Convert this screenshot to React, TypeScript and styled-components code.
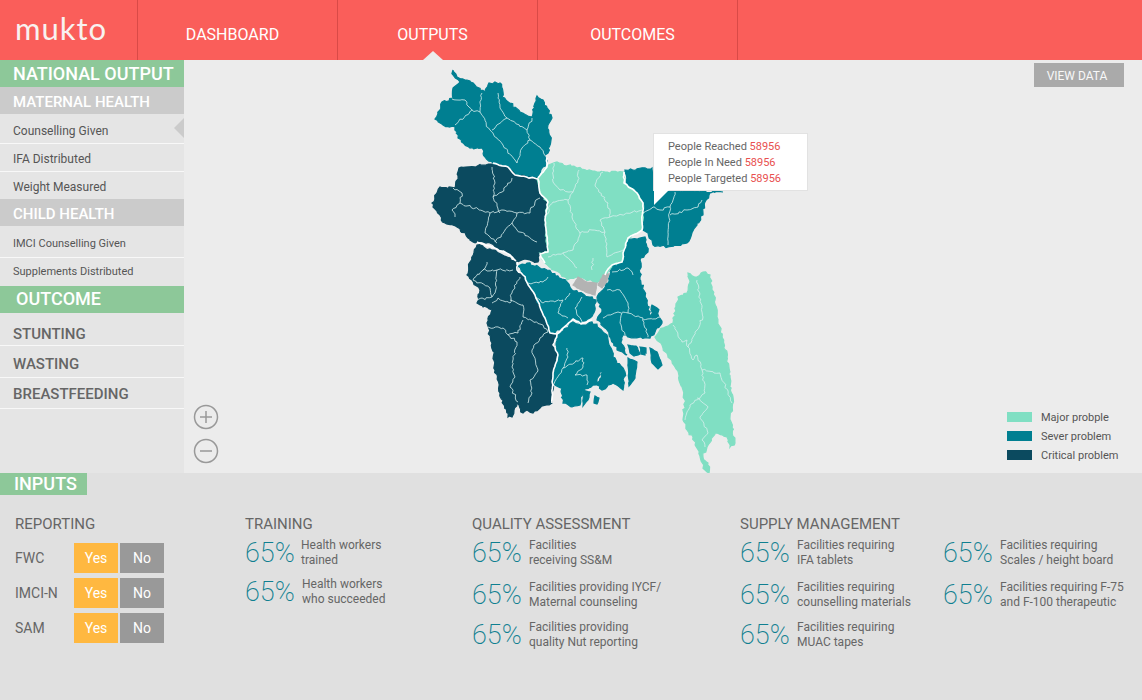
import React, { useMemo } from "react";
import styled, { createGlobalStyle } from "styled-components";

type Pt = number[];
type Tone = "major" | "sever" | "critical" | "capital";

const TONES: Record<Tone, string> = {
  major: "#80dfc3",
  sever: "#007f91",
  critical: "#0b4a5f",
  capital: "#b3b3b3",
};

const REGIONS: { tone: Tone; pts: Pt[]; fine?: boolean }[] = [
  // rangpur
  { tone: "sever", pts: [[453,70],[457,77],[465,80],[470,81],[475,85],[485,92],[489,83],[500,83],[503,92],[502,97],[510,103],[520,112],[532,117],[535,103],[537,96],[543,100],[547,108],[552,118],[548,125],[551,140],[548,153],[545,155],[547,162],[543,167],[538,178],[527,178],[513,175],[508,167],[493,163],[485,157],[482,148],[470,148],[458,138],[455,127],[443,125],[435,119],[440,110],[442,102],[453,98],[453,88],[460,82],[453,75]] },
  // rajshahi
  { tone: "critical", pts: [[459,168],[492,164],[508,167],[515,175],[538,179],[540,193],[547,200],[545,220],[548,250],[540,254],[538,262],[525,259],[516,261],[510,253],[497,248],[490,243],[477,242],[473,242],[457,227],[445,223],[433,207],[432,203],[440,187],[455,188]] },
  // khulna
  { tone: "critical", pts: [[470,262],[477,245],[497,252],[510,258],[516,262],[517,270],[523,275],[535,295],[545,318],[550,333],[556,334],[553,345],[558,355],[553,373],[552,403],[540,408],[533,413],[527,410],[523,413],[517,403],[514,410],[512,417],[508,417],[500,393],[495,370],[492,343],[487,323],[492,310],[477,303],[480,290],[472,280],[467,275]] },
  // dhaka west
  { tone: "sever", pts: [[518,266],[527,263],[547,270],[567,282],[572,290],[590,297],[596,300],[595,310],[590,318],[580,323],[573,318],[560,330],[550,333],[545,318],[535,295],[523,275]] },
  // barisal
  { tone: "sever", pts: [[557,335],[573,322],[583,325],[592,322],[607,335],[613,357],[625,372],[623,390],[613,383],[602,390],[597,385],[603,372],[600,372],[596,385],[583,390],[580,405],[572,407],[563,403],[562,388],[555,385],[553,375],[558,357],[556,345]] },
  { tone: "sever", pts: [[628,358],[637,362],[635,378],[629,386]], fine: true },
  { tone: "sever", pts: [[628,345],[636,346],[640,354],[634,356],[630,353]], fine: true },
  { tone: "sever", pts: [[640,347],[646,348],[646,353],[641,351]], fine: true },
  { tone: "sever", pts: [[650,348],[657,352],[662,365],[658,369],[652,363]], fine: true },
  { tone: "sever", pts: [[641,350],[645,352],[645,355],[641,354]], fine: true },
  { tone: "sever", pts: [[583,390],[590,392],[588,400],[583,406]], fine: true },
  { tone: "sever", pts: [[595,396],[599,398],[597,404],[594,403]], fine: true },
  // comilla
  { tone: "sever", pts: [[610,271],[618,258],[627,240],[645,237],[648,252],[640,260],[640,277],[647,303],[651,319],[652,305],[657,308],[662,323],[655,332],[650,338],[633,338],[623,335],[621,342],[627,355],[617,350],[607,330],[597,320],[602,310],[597,297],[608,283]] },
  // sylhet
  { tone: "sever", pts: [[625,170],[652,168],[665,190],[723,192],[710,193],[705,202],[703,213],[687,243],[668,247],[653,245],[648,233],[643,230],[643,203],[637,193],[627,185]] },
  // dhaka north
  { tone: "major", pts: [[547,167],[557,162],[577,168],[597,172],[623,172],[624,183],[637,193],[643,203],[642,230],[628,238],[623,253],[622,262],[612,265],[605,275],[597,283],[577,277],[567,280],[545,263],[540,253],[548,252],[545,220],[548,202],[540,193],[538,178]] },
  // chittagong
  { tone: "major", pts: [[688,273],[697,277],[703,272],[710,275],[715,300],[717,317],[727,357],[733,403],[730,417],[735,443],[730,447],[727,437],[715,433],[707,447],[703,457],[708,463],[709,473],[705,470],[693,437],[687,430],[683,420],[685,400],[677,370],[663,348],[655,337],[662,328],[673,323],[678,297],[687,293],[690,282]] },
  { tone: "capital", pts: [[578,277],[587,282],[597,283],[595,295],[588,293],[577,288],[573,285]], fine: true },
  { tone: "capital", pts: [[603,275],[609,274],[607,281],[602,288],[598,285],[600,281]], fine: true },
];

const THIN_LINES: Pt[][] = [
  [[452,99],[465,100],[472,110],[455,125]],
  [[482,93],[480,112],[472,110]],
  [[480,112],[490,130],[503,145],[515,160],[517,163]],
  [[498,93],[500,108],[507,118],[492,130]],
  [[507,118],[527,130],[530,140],[522,148],[517,163]],
  [[530,140],[540,147],[547,157]],
  [[532,118],[527,130]],
  [[492,167],[495,183],[493,197],[502,192],[512,178]],
  [[453,188],[462,193],[460,203],[452,210],[455,217]],
  [[460,203],[490,213],[503,210],[517,213],[512,223],[517,230],[537,242]],
  [[517,213],[530,213],[535,202],[540,198]],
  [[493,197],[500,213]],
  [[490,213],[485,233],[497,243]],
  [[512,223],[495,242]],
  [[554,163],[553,182],[560,190],[573,192],[578,180],[579,170]],
  [[573,192],[568,200],[572,217],[580,233],[573,250],[548,257]],
  [[603,172],[595,185],[608,203],[610,217],[600,220],[605,232],[592,230],[580,233]],
  [[610,217],[642,210]],
  [[568,200],[553,202],[545,217]],
  [[605,232],[607,257],[623,250]],
  [[563,253],[577,268]],
  [[593,258],[592,270]],
  [[643,213],[653,207],[660,210],[670,207],[675,192]],
  [[670,207],[668,237],[668,245]],
  [[670,215],[687,210],[698,207],[702,200]],
  [[487,262],[483,270],[473,280],[490,288],[492,297],[477,300]],
  [[483,270],[497,270],[513,270]],
  [[497,270],[495,293],[492,297]],
  [[520,277],[512,293],[510,303],[498,298],[492,303]],
  [[510,300],[523,305],[523,317],[543,325]],
  [[488,327],[503,328],[508,335],[518,333],[523,320]],
  [[508,335],[517,342],[512,367],[515,377],[510,387],[518,402]],
  [[543,325],[548,332],[540,338],[532,350],[538,370],[530,380],[532,393],[528,403]],
  [[528,283],[543,282],[548,277]],
  [[543,303],[563,300],[558,313],[568,318]],
  [[535,297],[543,303]],
  [[570,293],[565,300]],
  [[582,297],[575,308],[582,323]],
  [[567,348],[568,357],[563,368],[553,385]],
  [[563,368],[583,358],[583,367],[575,375],[587,375],[587,385]],
  [[607,290],[620,290],[628,303],[628,313],[618,312],[603,318]],
  [[622,313],[620,323],[625,335]],
  [[628,313],[643,318],[648,337]],
  [[643,320],[660,317]],
  [[612,272],[628,268],[633,275]],
  [[673,325],[682,342],[687,340],[688,347],[697,330],[703,317],[697,280]],
  [[688,347],[693,360],[697,355],[702,370],[720,373],[732,403]],
  [[702,370],[705,393],[690,405],[685,420]],
  [[697,398],[708,407],[700,417],[708,433],[702,440],[705,447]],
];

const THICK_LINES: Pt[][] = [
  [[493,163],[508,167],[515,175],[538,179],[540,193],[548,202],[545,220],[548,252],[540,254],[545,263]],
  [[547,158],[547,167],[538,178]],
  [[624,172],[624,183],[637,193],[643,203],[642,230],[628,238],[623,253],[622,262],[612,265],[605,275]],
  [[517,262],[517,270],[523,275],[535,295],[545,318],[550,333],[557,334],[553,345],[558,355],[553,373],[552,403]],
  [[557,334],[573,319],[581,324],[592,320]],
  [[477,242],[497,249],[510,255],[516,261]],
];

// little seeded jitter so the borders look traced and not straight
function roughen(pts: Pt[], closed: boolean, amount: number, step: number) {
  let seed = Math.round(pts[0][0] * 7 + pts[0][1] * 13);
  const rand = () => {
    seed = (seed * 1103515245 + 12345) & 0x7fffffff;
    return seed / 0x7fffffff - 0.5;
  };
  const list = closed ? [...pts, pts[0]] : pts;
  let d = "";
  for (let i = 0; i < list.length - 1; i++) {
    const [x1, y1] = list[i];
    const [x2, y2] = list[i + 1];
    const steps = Math.max(1, Math.round(Math.hypot(x2 - x1, y2 - y1) / step));
    for (let s = 0; s < steps; s++) {
      const t = s / steps;
      const jx = s === 0 ? 0 : rand() * amount;
      const jy = s === 0 ? 0 : rand() * amount;
      const x = (x1 + (x2 - x1) * t + jx).toFixed(1);
      const y = (y1 + (y2 - y1) * t + jy).toFixed(1);
      d += `${d ? "L" : "M"}${x} ${y}`;
    }
  }
  if (closed) return d + "Z";
  const end = list[list.length - 1];
  return d + `L${end[0]} ${end[1]}`;
}

const GlobalStyle = createGlobalStyle`
  html, body {
    margin: 0;
    padding: 0;
    background: #e0e0e0;
  }
  * {
    box-sizing: border-box;
  }
`;

const Page = styled.div`
  width: 1142px;
  height: 700px;
  overflow: hidden;
  display: flex;
  flex-direction: column;
  font-family: Roboto, "Liberation Sans", sans-serif;
  color: #666;
`;

const Header = styled.header`
  height: 60px;
  flex: none;
  display: flex;
  background: #fa5e5a;
`;

const Logo = styled.div`
  width: 138px;
  padding: 0 0 5px 15px;
  display: flex;
  align-items: center;
  border-right: 1px solid #d94a47;
  font-family: Lato, sans-serif;
  font-weight: 400;
  font-size: 31px;
  letter-spacing: 1px;
  color: #f8f2f0;
`;

const NavTab = styled.a<{ $active?: boolean }>`
  position: relative;
  width: 200px;
  padding: 8px 10px 0 0;
  display: flex;
  align-items: center;
  justify-content: center;
  border-right: 1px solid #d94a47;
  font-size: 16px;
  color: #fff;

  ${(p) =>
    p.$active &&
    `
    &::after {
      content: "";
      position: absolute;
      left: 85px;
      bottom: 0;
      border-left: 10px solid transparent;
      border-right: 10px solid transparent;
      border-bottom: 9px solid #ececec;
    }
  `}
`;

const Middle = styled.div`
  height: 413px;
  flex: none;
  display: flex;
`;

const Sidebar = styled.aside`
  width: 184px;
  flex: none;
  background: #e5e5e5;
`;

const GreenTitle = styled.div<{ $indent: number; $lift?: number }>`
  height: 27px;
  padding: 0 0 ${(p) => p.$lift ?? 0}px ${(p) => p.$indent}px;
  display: flex;
  align-items: center;
  background: #8dc899;
  font-size: 18px;
  font-weight: 500;
  color: #fff;
`;

const GrayTitle = styled.div`
  height: 27px;
  padding: 2px 0 0 13px;
  display: flex;
  align-items: center;
  background: #cbcbcb;
  font-size: 15px;
  font-weight: 500;
  color: #fff;
`;

const SideItem = styled.div<{ $h: number; $top: number; $small?: boolean; $active?: boolean; $last?: boolean }>`
  position: relative;
  height: ${(p) => p.$h}px;
  padding: ${(p) => p.$top}px 0 0 13px;
  border-bottom: ${(p) => (p.$last ? "none" : "1px solid #f8f8f8")};
  font-size: ${(p) => (p.$small ? 11 : 12)}px;
  line-height: ${(p) => (p.$small ? 13 : 14)}px;
  color: #555;

  ${(p) =>
    p.$active &&
    `
    &::after {
      content: "";
      position: absolute;
      right: 0;
      top: 4px;
      border-top: 10px solid transparent;
      border-bottom: 10px solid transparent;
      border-right: 10px solid #cbcbcb;
    }
  `}
`;

const OutcomeItem = styled.div<{ $h: number; $top: number }>`
  height: ${(p) => p.$h}px;
  padding: ${(p) => p.$top}px 0 0 13px;
  border-bottom: 1px solid #f8f8f8;
  font-size: 15px;
  line-height: 18px;
  font-weight: 500;
  color: #666;
`;

const MapPanel = styled.main`
  position: relative;
  flex: 1;
  background: #ececec;
`;

const MapSvg = styled.svg`
  display: block;
`;

const Region = styled.path<{ $tone: Tone }>`
  fill: ${(p) => TONES[p.$tone]};
  stroke: ${(p) => TONES[p.$tone]};
  stroke-width: 1.2;
`;

const Border = styled.path<{ $thick?: boolean }>`
  fill: none;
  stroke: ${(p) => (p.$thick ? "#fff" : "#d8efed")};
  stroke-width: ${(p) => (p.$thick ? 1.6 : 0.8)};
  stroke-linejoin: round;
`;

const ViewData = styled.button`
  position: absolute;
  top: 3px;
  right: 18px;
  width: 90px;
  height: 24px;
  padding: 1px 4px 0 0;
  border: 0;
  background: #aaa;
  font-family: inherit;
  font-size: 12px;
  color: #f8f8f8;
`;

const Tooltip = styled.div`
  position: absolute;
  left: 469px;
  top: 73px;
  width: 155px;
  height: 58px;
  padding: 5px 0 0 14px;
  background: #fff;
  border: 1px solid #e2e2e2;
  font-size: 11px;
  line-height: 16px;
  color: #666;

  &::after {
    content: "";
    position: absolute;
    left: 0;
    top: 56px;
    border-top: 15px solid #fff;
    border-right: 15px solid transparent;
  }
`;

const Value = styled.span`
  color: #e8504f;
`;

const ZoomControls = styled.div`
  position: absolute;
  left: 9px;
  top: 344px;
  display: flex;
  flex-direction: column;
  gap: 8px;
`;

const ZoomIcon = styled.svg`
  display: block;
  width: 26px;
  height: 26px;
  fill: none;
  stroke: #999;
  stroke-width: 1.5;
`;

const Legend = styled.div`
  position: absolute;
  left: 823px;
  top: 350px;
  display: flex;
  flex-direction: column;
  gap: 5px;
`;

const LegendRow = styled.div`
  height: 14px;
  display: flex;
  align-items: center;
  gap: 9px;
  font-size: 11px;
  color: #555;
`;

const Swatch = styled.span<{ $tone: Tone }>`
  width: 25px;
  height: 10px;
  background: ${(p) => TONES[p.$tone]};
`;

const Bottom = styled.section`
  flex: 1;
  background: #e0e0e0;
`;

const InputsTitle = styled.div`
  width: 87px;
  height: 22px;
  padding: 0 0 2px 14px;
  display: flex;
  align-items: center;
  background: #8dc899;
  font-size: 18px;
  font-weight: 500;
  color: #fff;
`;

const Columns = styled.div`
  padding: 19px 0 0 15px;
  display: flex;
`;

const Column = styled.div<{ $w: number }>`
  width: ${(p) => p.$w}px;
  flex: none;
`;

const ColumnTitle = styled.h3`
  margin: 0;
  height: 20px;
  display: flex;
  align-items: center;
  font-size: 15px;
  font-weight: 400;
  color: #666;
`;

const ReportRows = styled.div`
  margin-top: 9px;
  display: flex;
  flex-direction: column;
  gap: 5px;
`;

const ReportRow = styled.div`
  display: flex;
  align-items: center;
`;

const ReportLabel = styled.span`
  width: 59px;
  font-size: 14px;
  color: #666;
`;

const Choice = styled.span<{ $yes?: boolean }>`
  width: 44px;
  height: 30px;
  margin-right: 2px;
  display: flex;
  align-items: center;
  justify-content: center;
  background: ${(p) => (p.$yes ? "#ffb840" : "#999")};
  font-size: 14px;
  color: #fff;
`;

const Stats = styled.div<{ $cols?: number }>`
  display: grid;
  grid-template-columns: ${(p) => (p.$cols === 2 ? "203px 203px" : "1fr")};
`;

const Stat = styled.div<{ $h: number; $gap: number }>`
  height: ${(p) => p.$h}px;
  display: flex;
  align-items: flex-start;
  gap: ${(p) => p.$gap}px;
`;

const Percent = styled.span<{ $w: number }>`
  width: ${(p) => p.$w}px;
  flex: none;
  margin-top: 2px;
  font-size: 27px;
  font-weight: 200;
  line-height: 34px;
  color: #0f7f90;
`;

const StatText = styled.span`
  margin-top: 4px;
  font-size: 12px;
  line-height: 15px;
  color: #666;
`;

type StatRow = { lines: [string, string]; h: number };

const QUALITY: StatRow[] = [
  { lines: ["Facilities", "receiving SS&M"], h: 42 },
  { lines: ["Facilities providing IYCF/", "Maternal counseling"], h: 40 },
  { lines: ["Facilities providing", "quality Nut reporting"], h: 40 },
];

const SUPPLY: StatRow[] = [
  { lines: ["Facilities requiring", "IFA tablets"], h: 42 },
  { lines: ["Facilities requiring", "Scales / height board"], h: 42 },
  { lines: ["Facilities requiring", "counselling materials"], h: 40 },
  { lines: ["Facilities requiring F-75", "and F-100 therapeutic"], h: 40 },
  { lines: ["Facilities requiring", "MUAC tapes"], h: 40 },
];

function StatBlock({ lines, h, gap = 8, pw = 49 }: { lines: [string, string]; h: number; gap?: number; pw?: number }) {
  return (
    <Stat $h={h} $gap={gap}>
      <Percent $w={pw}>65%</Percent>
      <StatText>
        {lines[0]}
        <br />
        {lines[1]}
      </StatText>
    </Stat>
  );
}

function BangladeshMap() {
  const regions = useMemo(
    () => REGIONS.map((r) => ({ tone: r.tone, d: roughen(r.pts, true, r.fine ? 0.8 : 2.4, 2.5) })),
    []
  );
  const thin = useMemo(() => THIN_LINES.map((l) => roughen(l, false, 2.2, 2.5)), []);
  const thick = useMemo(() => THICK_LINES.map((l) => roughen(l, false, 1.4, 3)), []);

  return (
    <MapSvg width="958" height="413" viewBox="184 60 958 413">
      {regions.map((r, i) => (
        <Region key={i} $tone={r.tone} d={r.d} />
      ))}
      {thin.map((d, i) => (
        <Border key={i} d={d} />
      ))}
      {thick.map((d, i) => (
        <Border key={i} $thick d={d} />
      ))}
    </MapSvg>
  );
}

export default function App() {
  return (
    <Page>
      <GlobalStyle />
      <Header>
        <Logo>mukto</Logo>
        <NavTab>DASHBOARD</NavTab>
        <NavTab $active>OUTPUTS</NavTab>
        <NavTab>OUTCOMES</NavTab>
      </Header>

      <Middle>
        <Sidebar>
          <GreenTitle $indent={13}>NATIONAL OUTPUT</GreenTitle>
          <GrayTitle>MATERNAL HEALTH</GrayTitle>
          <SideItem $h={30} $top={10} $active>Counselling Given</SideItem>
          <SideItem $h={28} $top={8}>IFA Distributed</SideItem>
          <SideItem $h={27} $top={8} $last>Weight Measured</SideItem>
          <GrayTitle>CHILD HEALTH</GrayTitle>
          <SideItem $h={32} $top={11} $small>IMCI Counselling Given</SideItem>
          <SideItem $h={28} $top={7} $small $last>Supplements Distributed</SideItem>
          <GreenTitle $indent={16} $lift={2}>OUTCOME</GreenTitle>
          <OutcomeItem $h={33} $top={12}>STUNTING</OutcomeItem>
          <OutcomeItem $h={32} $top={9}>WASTING</OutcomeItem>
          <OutcomeItem $h={31} $top={7}>BREASTFEEDING</OutcomeItem>
        </Sidebar>

        <MapPanel>
          <BangladeshMap />
          <ViewData>VIEW DATA</ViewData>
          <Tooltip>
            People Reached <Value>58956</Value>
            <br />
            People In Need <Value>58956</Value>
            <br />
            People Targeted <Value>58956</Value>
          </Tooltip>
          <ZoomControls>
            <ZoomIcon viewBox="0 0 26 26">
              <circle cx="13" cy="13" r="11.5" />
              <path d="M7 13h12M13 7v12" />
            </ZoomIcon>
            <ZoomIcon viewBox="0 0 26 26">
              <circle cx="13" cy="13" r="11.5" />
              <path d="M7 13h12" />
            </ZoomIcon>
          </ZoomControls>
          <Legend>
            <LegendRow><Swatch $tone="major" />Major probple</LegendRow>
            <LegendRow><Swatch $tone="sever" />Sever problem</LegendRow>
            <LegendRow><Swatch $tone="critical" />Critical problem</LegendRow>
          </Legend>
        </MapPanel>
      </Middle>

      <Bottom>
        <InputsTitle>INPUTS</InputsTitle>
        <Columns>
          <Column $w={230}>
            <ColumnTitle>REPORTING</ColumnTitle>
            <ReportRows>
              {["FWC", "IMCI-N", "SAM"].map((name) => (
                <ReportRow key={name}>
                  <ReportLabel>{name}</ReportLabel>
                  <Choice $yes>Yes</Choice>
                  <Choice>No</Choice>
                </ReportRow>
              ))}
            </ReportRows>
          </Column>
          <Column $w={227}>
            <ColumnTitle>TRAINING</ColumnTitle>
            <StatBlock lines={["Health workers", "trained"]} h={39} gap={6} pw={50} />
            <StatBlock lines={["Health workers", "who succeeded"]} h={39} gap={7} pw={50} />
          </Column>
          <Column $w={268}>
            <ColumnTitle>QUALITY ASSESSMENT</ColumnTitle>
            <Stats>
              {QUALITY.map((s) => (
                <StatBlock key={s.lines[1]} lines={s.lines} h={s.h} />
              ))}
            </Stats>
          </Column>
          <Column $w={402}>
            <ColumnTitle>SUPPLY MANAGEMENT</ColumnTitle>
            <Stats $cols={2}>
              {SUPPLY.map((s) => (
                <StatBlock key={s.lines[1]} lines={s.lines} h={s.h} />
              ))}
            </Stats>
          </Column>
        </Columns>
      </Bottom>
    </Page>
  );
}
